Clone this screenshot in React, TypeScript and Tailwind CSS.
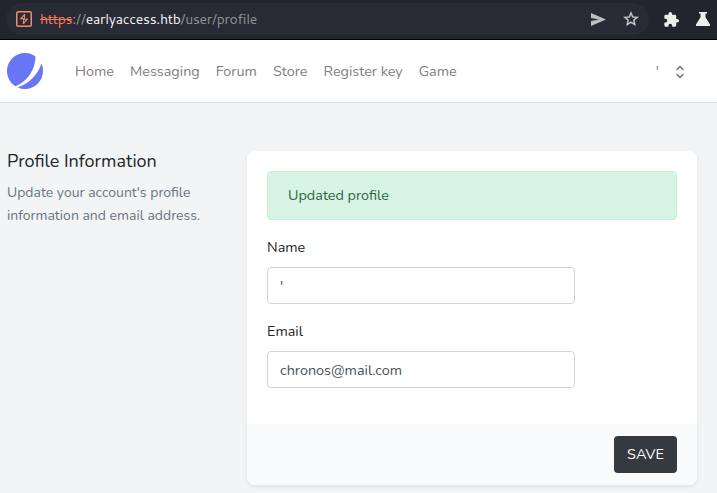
import React from "react";

const links = ["Home", "Messaging", "Forum", "Store", "Register key", "Game"];

function AddressBar() {
  return (
    <header className="flex h-10 items-start border-b border-black bg-[#22242e] pt-[3px] font-['Cantarell','Noto_Sans',sans-serif]">
      <div className="ml-1.5 flex h-8 w-[643px] items-center rounded-full bg-[#282a36] pl-[10px] pr-[10px]">
        <svg width="16" height="16" viewBox="0 0 16 16" fill="none" className="shrink-0">
          <rect x="0.75" y="0.75" width="14.5" height="14.5" rx="1.5" stroke="#f58c66" strokeWidth="1.5" />
          <path d="M8.8 3L4.8 7.8H7.6L7.2 9.2M8.8 3L8.3 6.4M7.2 12.8L11.2 8.2H8.4L8.3 6.4M7.2 12.8L7.7 9.4" stroke="#f58c66" strokeWidth="1.1" />
        </svg>
        <div className="ml-2 flex-1 whitespace-nowrap text-[14px] leading-5 tracking-[-0.3px] text-[#8f9094]">
          <span className="text-[#f47c56] line-through decoration-[1.3px]">https</span>
          <span className="tracking-[-0.1px]">://</span>
          <span className="text-[#f1f1f2]">earlyaccess.htb</span>
          <span>/user/profile</span>
        </div>
        <svg width="15" height="13" viewBox="0 0 15 13" fill="#bfbfc1" className="mr-[17px]">
          <path d="M0 0L15 6.5L0 13V8L8 6.5L0 5Z" />
        </svg>
        <svg width="16" height="16" viewBox="1.5 1.5 21 21" fill="#c7c7c9" stroke="#c7c7c9" strokeWidth="0.4">
          <path d="M22 9.24l-7.19-.62L12 2 9.19 8.63 2 9.24l5.46 4.73L5.82 21 12 17.27 18.18 21l-1.63-7.03L22 9.24zM12 15.4l-3.76 2.27 1-4.28-3.32-2.88 4.38-.38L12 6.1l1.71 4.04 4.38.38-3.32 2.88 1 4.28L12 15.4z" />
        </svg>
      </div>
      <svg width="15" height="15" viewBox="1.5 1 21.5 21.5" fill="#ededeb" className="ml-[15px] mt-[9px]">
        <path d="M20.5 11H19V7c0-1.1-.9-2-2-2h-4V3.5C13 2.12 11.88 1 10.5 1S8 2.12 8 3.5V5H4c-1.1 0-1.99.9-1.99 2v3.8H3.5c1.49 0 2.7 1.21 2.7 2.7s-1.21 2.7-2.7 2.7H2V20c0 1.1.9 2 2 2h3.8v-1.5c0-1.49 1.21-2.7 2.7-2.7 1.49 0 2.7 1.21 2.7 2.7V22H17c1.1 0 2-.9 2-2v-4h1.5c1.38 0 2.5-1.12 2.5-2.5S21.88 11 20.5 11z" />
      </svg>
      <svg width="14" height="14" viewBox="0 0 14 14" fill="#ededeb" className="ml-[17px] mt-[9px]">
        <path d="M3 0H11V1.5H9.5V5.3L14 12.5V14H0V12.5L4.5 5.3V1.5H3Z" />
      </svg>
    </header>
  );
}

function NavBar() {
  return (
    <nav className="flex h-[63px] items-center border-b border-[#dee2e6] bg-white pl-[7px] pr-8">
      <svg width="36" height="36" viewBox="0 0 48 48" fill="#6875f5" className="shrink-0">
        <path d="M11.395 44.428C4.557 40.198 0 32.632 0 24 0 10.745 10.745 0 24 0a23.891 23.891 0 0113.997 4.502c-.2 17.907-11.097 33.245-26.602 39.926z" />
        <path d="M14.134 45.885A23.914 23.914 0 0024 48c13.255 0 24-10.745 24-24 0-3.516-.756-6.856-2.115-9.866-4.659 15.143-16.608 27.092-31.75 31.751z" />
      </svg>
      <div className="ml-8 flex gap-4 text-[#808080]">
        {links.map((label) => (
          <a key={label} className="whitespace-nowrap">{label}</a>
        ))}
      </div>
      <div className="ml-auto flex items-center gap-3 text-[#808080]">
        <span>'</span>
        <svg width="18" height="18" viewBox="0 0 20 20" fill="#7d7d7d" className="-mr-1 mt-0.5">
          <path fillRule="evenodd" clipRule="evenodd" d="M10 3a1 1 0 01.707.293l3 3a1 1 0 01-1.414 1.414L10 5.414 7.707 7.707a1 1 0 01-1.414-1.414l3-3A1 1 0 0110 3zm-3.707 9.293a1 1 0 011.414 0L10 14.586l2.293-2.293a1 1 0 011.414 1.414l-3 3a1 1 0 01-1.414 0l-3-3a1 1 0 010-1.414z" />
        </svg>
      </div>
    </nav>
  );
}

function Field({ label, value }: { label: string; value: string }) {
  return (
    <label className="block">
      <span className="mb-2 block leading-[23px] text-[#212529]">{label}</span>
      <span className="flex h-[37px] w-[308px] items-center rounded border border-[#ced4da] bg-white px-3 pt-px text-[#495057]">{value}</span>
    </label>
  );
}

export default function App() {
  return (
    <div className="h-[493px] w-[717px] overflow-hidden bg-[#f3f4f6] font-['Nunito','Lato',sans-serif] text-[14.4px] leading-[23px]">
      <AddressBar />
      <NavBar />
      <main className="flex items-start pl-[7px] pt-12">
        <section className="w-60">
          <h1 className="text-[18px] leading-[20px] text-[#212529]">Profile Information</h1>
          <p className="mt-2.5 whitespace-nowrap text-[14px] text-[#6c757d]">
            Update your account's profile<br />information and email address.
          </p>
        </section>
        <section className="w-[450px] overflow-hidden rounded-lg bg-white shadow-[0_2px_4px_rgba(0,0,0,0.075)]">
          <div className="h-[273px] p-5">
            <div className="mb-4 flex h-[49px] items-center rounded border border-[#c7eed8] bg-[#d7f3e3] px-5 text-[#2b6845]">Updated profile</div>
            <div className="flex flex-col gap-4">
              <Field label="Name" value="'" />
              <Field label="Email" value="chronos@mail.com" />
            </div>
          </div>
          <div className="flex h-[61px] items-center justify-end bg-[#f8fafc] pr-5">
            <button className="h-[37px] w-[63px] rounded bg-[#343a40] text-white">SAVE</button>
          </div>
        </section>
      </main>
    </div>
  );
}
